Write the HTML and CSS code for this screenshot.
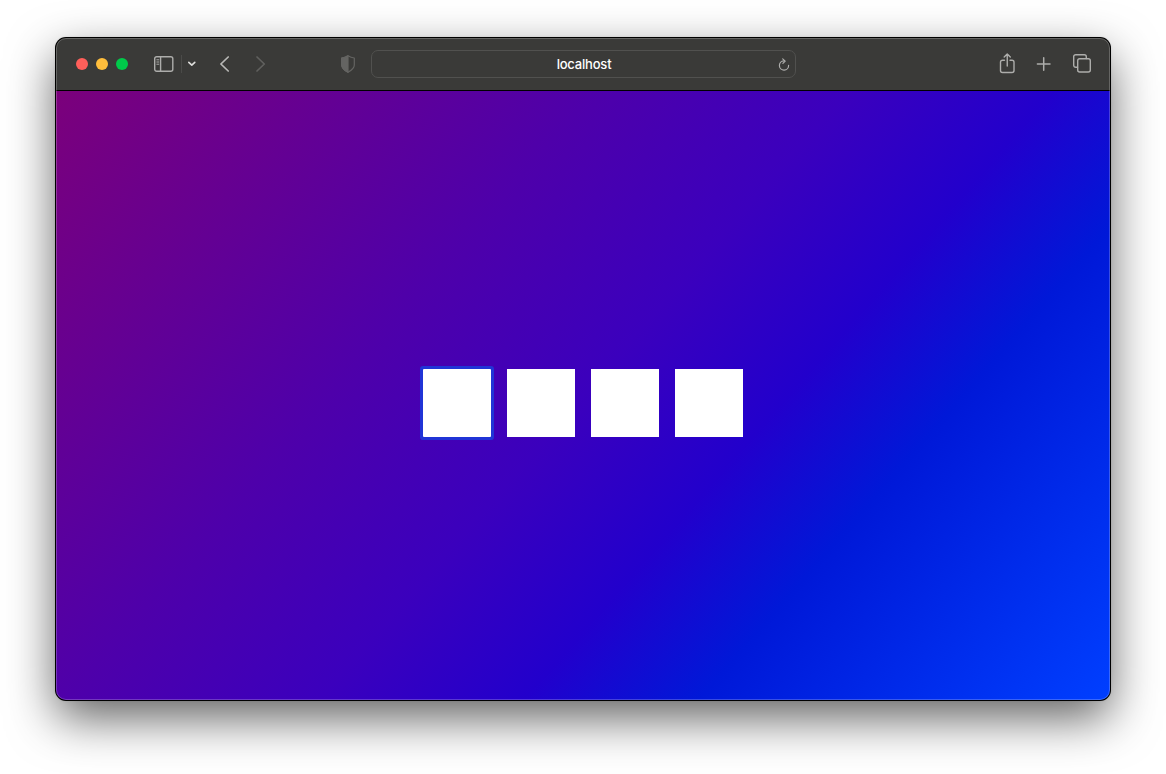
FILE: index.html
```html
<!DOCTYPE html>
<html lang="en">
<head>
<meta charset="utf-8">
<title>localhost</title>
<link rel="stylesheet" href="styles.css">
</head>
<body>
<div class="window">
  <header class="toolbar">
    <div class="lights"><span class="light red"></span><span class="light yellow"></span><span class="light green"></span></div>
    <svg class="icon sidebar" width="20" height="16" viewBox="0 0 20 16"><rect x=".7" y=".7" width="18.1" height="14.6" rx="2"/><path d="M6.6 1v14"/><path class="thin" d="M2.8 3.8h2M2.8 6h2M2.8 8.2h2"/></svg>
    <span class="divider"></span>
    <svg class="icon chevron" width="8" height="6" viewBox="0 0 8 6"><path d="M.8 1.300l3 2.900 3-2.900"/></svg>
    <svg class="icon back" width="10" height="16" viewBox="0 0 10 16"><path d="M8.200 1L.900 8l7.300 7"/></svg>
    <svg class="icon forward" width="10" height="16" viewBox="0 0 10 16"><path d="M1 1l7.300 7L1 15"/></svg>
    <svg class="icon shield" width="14" height="18" viewBox="0 0 14 18"><path d="M7 .8c2 1.300 4 2 6.300 2.200V10c0 3.200-3 5.400-6.300 7.300C3.700 15.400.700 13.200.700 10V3C3 2.800 5 2.100 7 .8z"/><path class="half" d="M7 .8v16.500C3.700 15.400.700 13.200.700 10V3C3 2.800 5 2.100 7 .8z"/></svg>
    <div class="address"><span class="host">localhost</span>
      <svg class="icon reload" width="12" height="13" viewBox="0 0 12 13"><path d="M5.700 2.900A4.600 4.600 0 1 0 10.600 7.400M4.700.900l2.500 2.200-2.300 2.300"/></svg>
    </div>
    <div class="actions">
      <svg class="icon share" width="16" height="21" viewBox="0 0 16 21"><path d="M4.500 7.200H2.500a2 2 0 0 0-2 2v8.300a2 2 0 0 0 2 2h9.500a2 2 0 0 0 2-2V9.200a2 2 0 0 0-2-2h-2M7.250 13V1.300M4.200 4.100l3.050-3 3.050 3"/></svg>
      <svg class="icon plus" width="14" height="14" viewBox="0 0 14 14"><path d="M6.700 .700v12.600M.400 7h12.600"/></svg>
      <svg class="icon tabs" width="18" height="19" viewBox="0 0 18 19"><path d="M4.500 13.300H2.700a2 2 0 0 1-2-2V2.700a2 2 0 0 1 2-2h8.600a2 2 0 0 1 2 2v1.800"/><rect x="4.700" y="4.700" width="12.600" height="13.300" rx="2"/></svg>
    </div>
  </header>
  <main class="page">
    <input class="digit focused" maxlength="1" aria-label="Digit 1">
    <input class="digit" maxlength="1" aria-label="Digit 2">
    <input class="digit" maxlength="1" aria-label="Digit 3">
    <input class="digit" maxlength="1" aria-label="Digit 4">
  </main>
</div>
</body>
</html>
```
FILE: styles.css
```css
* { box-sizing: border-box; }
body { margin: 0; height: 774px; padding: 38px 56px 0; background: #fff; overflow: hidden; font-family: Inter, "Liberation Sans", sans-serif; }
.window {
  position: relative; height: 662px; width: 1054px; border-radius: 10px; overflow: hidden;
  display: flex; flex-direction: column; background: #3a3a38;
  box-shadow: 0 0 0 1px #000, 0 18px 48px rgba(0,0,0,.62), 0 0 3px rgba(0,0,0,.25);
}
.window::after { content: ""; position: absolute; inset: 0; border-radius: 10px; border: 1px solid rgba(255,255,255,.22); pointer-events: none; }
.toolbar { height: 53px; flex: none; display: flex; align-items: center; padding: 0 19px 1px 20px; border-bottom: 1px solid #000; background: #3a3a38; }
.lights { display: flex; gap: 8px; }
.light { width: 12px; height: 12px; border-radius: 50%; }
.red { background: #ff5f5a; }
.yellow { background: #ffbe3c; }
.green { background: #00ca4a; }
.icon { flex: none; fill: none; stroke: #adadab; stroke-width: 1.4; stroke-linecap: round; stroke-linejoin: round; overflow: visible; }
.sidebar { margin-left: 26px; }
.thin { stroke-width: 1; }
.divider { width: 1px; height: 18px; margin-left: 7px; background: #4b4b49; }
.chevron { margin-left: 6px; stroke: #dededc; stroke-width: 1.6; }
.back { margin-left: 24px; stroke: #b8b8b6; stroke-width: 1.7; }
.forward { margin-left: 26px; stroke: #60605e; stroke-width: 1.7; }
.shield { margin-left: 75px; stroke: #646462; stroke-width: 1.2; }
.half { fill: #646462; }
.address { width: 425px; height: 28px; margin-left: 16px; border: 1px solid #51514f; border-radius: 7px; display: grid; grid-template-columns: 1fr auto 1fr; align-items: center; }
.host { grid-column: 2; padding-left: 1px; color: #fff; font-size: 13px; line-height: 16px; font-weight: 500; letter-spacing: -.2px; }
.reload { justify-self: end; margin: 2px 5px 0 0; stroke-width: 1.2; }
.actions { display: flex; align-items: center; margin-left: auto; }
.share { margin-bottom: 1px; }
.plus { margin-left: 21px; stroke-width: 1.5; }
.tabs { margin-left: 22px; }
.page { flex: 1; display: flex; align-items: center; justify-content: center; gap: 16px; padding-top: 15px; background: linear-gradient(131deg, #7b007b 0%, #4e00aa 34%, #3b00bd 50%, #2200cc 63%, #0018d8 74%, #003fff 100%); }
.digit { width: 68px; height: 68px; border: 0; padding: 0; background: #fff; text-align: center; font: 32px "Liberation Sans", sans-serif; }
.focused { border-radius: 1px; box-shadow: 0 0 0 3px #2034d6; outline: none; }
```
